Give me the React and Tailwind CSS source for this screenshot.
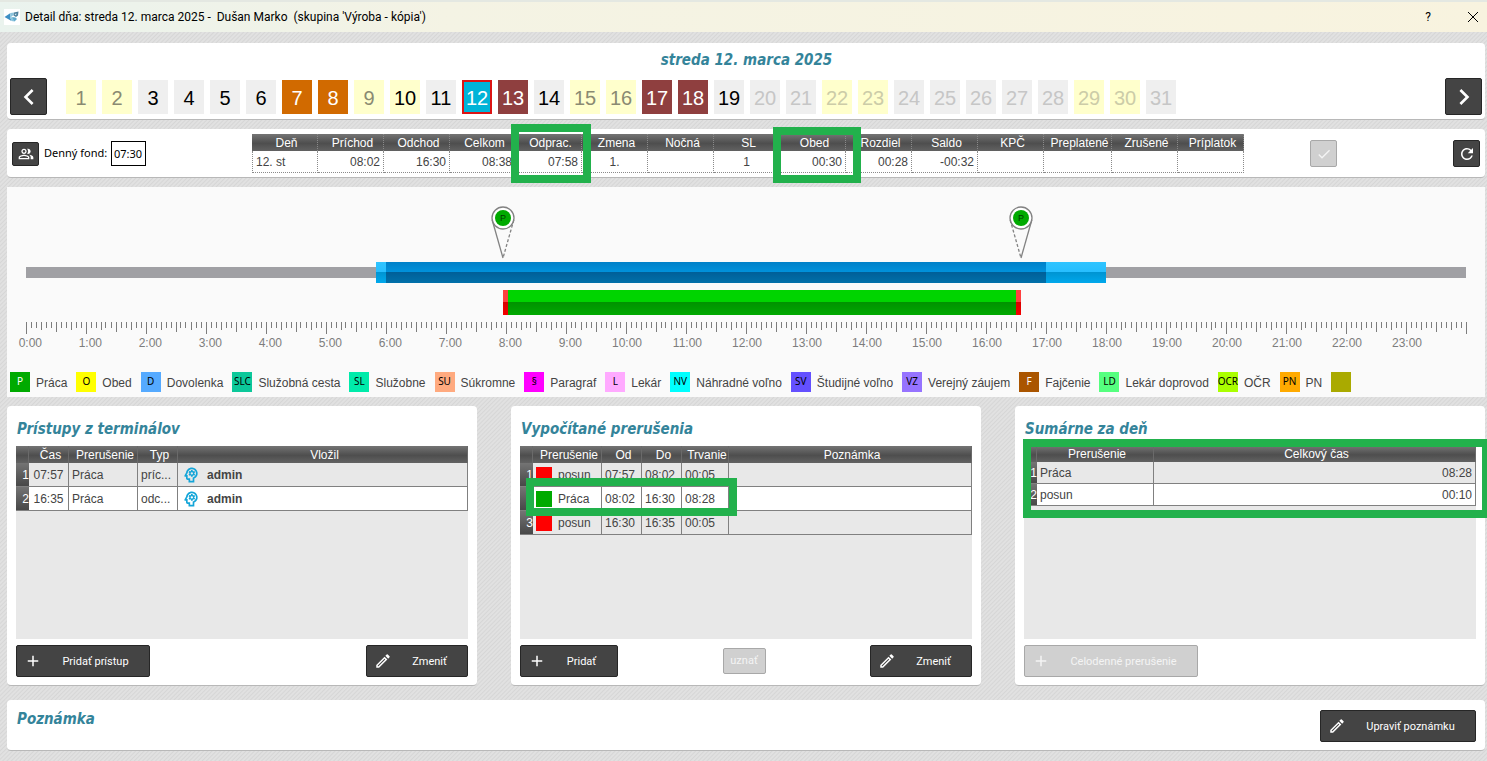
import clsx from "clsx";
import {
  MdAdd,
  MdCheck,
  MdChevronLeft,
  MdChevronRight,
  MdOutlineModeEdit,
  MdOutlinePeopleAlt,
  MdOutlinePsychology,
  MdRefresh,
} from "react-icons/md";

const headerRow =
  "bg-linear-to-b from-[#747474] via-[#4e4e4e] via-55% to-[#626262] text-white";

// weekend, work, error, vacation... one background and one text colour each
const dayStyles = {
  weekend: "bg-[#ffffcc] text-[#8a8a72]",
  weekendWork: "bg-[#ffffcc] text-black",
  weekendNext: "bg-[#ffffcc] text-[#cccca8]",
  work: "bg-[#efefef] text-black",
  next: "bg-[#efefef] text-[#c6c6c6]",
  orange: "bg-[#d16a00] text-white",
  red: "bg-[#8f3f3f] text-white",
  current: "border-2 border-[#dc1414] bg-[#00b4d8] text-white",
};

const dayKinds = {
  1: "weekend",
  2: "weekend",
  7: "orange",
  8: "orange",
  9: "weekend",
  10: "weekendWork",
  12: "current",
  13: "red",
  15: "weekend",
  16: "weekend",
  17: "red",
  18: "red",
  22: "weekendNext",
  23: "weekendNext",
  29: "weekendNext",
  30: "weekendNext",
};

const days = Array.from({ length: 31 }, (_, i) => i + 1).map((day) => ({
  day,
  kind: dayKinds[day] || (day > 19 ? "next" : "work"),
}));

const dayColumns = [
  { name: "Deň", value: "12. st", align: "text-left" },
  { name: "Príchod", value: "08:02" },
  { name: "Odchod", value: "16:30" },
  { name: "Celkom", value: "08:38" },
  { name: "Odprac.", value: "07:58" },
  { name: "Zmena", value: "1.", align: "text-center" },
  { name: "Nočná", value: "" },
  { name: "SL", value: "1", align: "text-center" },
  { name: "Obed", value: "00:30" },
  { name: "Rozdiel", value: "00:28" },
  { name: "Saldo", value: "-00:32" },
  { name: "KPČ", value: "" },
  { name: "Preplatené", value: "" },
  { name: "Zrušené", value: "" },
  { name: "Príplatok", value: "" },
];

const blueDark =
  "bg-[linear-gradient(#0080c8,#0092dc_48%,#005f98_48%,#0070aa)]";
const blueLight =
  "bg-[linear-gradient(#30c4ff,#26beff_48%,#0094d2_48%,#00a8ec)]";
const green = "bg-[linear-gradient(#00d400,#00d400_48%,#009200_48%,#00a800)]";
const red = "bg-[linear-gradient(#ff4040,#ff4040_48%,#d80000_48%,#f40000)]";

// times are minutes from midnight
const shiftBars = [
  { from: 350, to: 360, color: blueLight },
  { from: 360, to: 1020, color: blueDark },
  { from: 1020, to: 1080, color: blueLight },
];

const workBars = [
  { from: 477, to: 482, color: red },
  { from: 482, to: 990, color: green },
  { from: 990, to: 995, color: red },
];

const legend = [
  { code: "P", name: "Práca", color: "bg-[#00aa00] text-white" },
  { code: "O", name: "Obed", color: "bg-[#ffff00] text-black" },
  { code: "D", name: "Dovolenka", color: "bg-[#55aaff] text-black" },
  { code: "SLC", name: "Služobná cesta", color: "bg-[#0cc89a] text-black" },
  { code: "SL", name: "Služobne", color: "bg-[#00ebaa] text-black" },
  { code: "SU", name: "Súkromne", color: "bg-[#ffaa7f] text-black" },
  { code: "§", name: "Paragraf", color: "bg-[#ff00ff] text-black" },
  { code: "L", name: "Lekár", color: "bg-[#ffaaff] text-black" },
  { code: "NV", name: "Náhradné voľno", color: "bg-[#00ffff] text-black" },
  { code: "SV", name: "Študijné voľno", color: "bg-[#6450ff] text-black" },
  { code: "VZ", name: "Verejný záujem", color: "bg-[#9673ff] text-black" },
  { code: "F", name: "Fajčenie", color: "bg-[#aa5500] text-white" },
  { code: "LD", name: "Lekár doprovod", color: "bg-[#55ff7f] text-black" },
  { code: "OCR", name: "OČR", color: "bg-[#aaff00] text-black" },
  { code: "PN", name: "PN", color: "bg-[#ffaa00] text-black" },
  { code: "", name: "", color: "bg-[#aaaa00]" },
];

const accesses = [
  { time: "07:57", name: "Práca", type: "príc...", user: "admin" },
  { time: "16:35", name: "Práca", type: "odc...", user: "admin" },
];

const interruptions = [
  { name: "posun", color: "bg-[#ff0000]", from: "07:57", to: "08:02", total: "00:05" },
  { name: "Práca", color: "bg-[#00aa00]", from: "08:02", to: "16:30", total: "08:28" },
  { name: "posun", color: "bg-[#ff0000]", from: "16:30", to: "16:35", total: "00:05" },
];

const summary = [
  { name: "Práca", total: "08:28" },
  { name: "posun", total: "00:10" },
];

function App() {
  return (
    <div className="min-h-screen overflow-x-hidden bg-[repeating-linear-gradient(135deg,#d6d6d6_0px,#e1e1e1_1px,#e1e1e1_2px,#d6d6d6_3px)] font-['Liberation_Sans',sans-serif] text-xs text-[#444444]">
      <TitleBar />
      <main className="flex flex-col pt-[11px] pr-[2px] pb-2.5 pl-[7px]">
        <DayPicker />
        <DaySummary />
        <Timeline />
        <div className="mt-[9px] grid grid-cols-3 gap-[34px]">
          <Accesses />
          <Interruptions />
          <Totals />
        </div>
        <section className="mt-3.5 flex h-[51px] items-start justify-between rounded border-b border-[#b8b8b8] bg-white px-[9px] pt-2.5">
          <Title>Poznámka</Title>
          <ActionButton icon={MdOutlineModeEdit} width="w-[156px]">
            Upraviť poznámku
          </ActionButton>
        </section>
      </main>
    </div>
  );
}

const TitleBar = () => (
  <header className="flex h-8 items-center border-t-2 border-[#e4e8e2] bg-linear-to-r from-[#eaf3ee] via-[#f4f3e4] via-30% to-[#f8f3df] pl-1 font-[Roboto,sans-serif] text-xs text-black">
    <AppLogo />
    <h1 className="ml-[5px] whitespace-pre">
      {"Detail dňa: streda 12. marca 2025 -  Dušan Marko  (skupina 'Výroba - kópia')"}
    </h1>
    <button className="ml-auto w-[62px]" aria-label="Pomocník">
      ?
    </button>
    <button className="flex w-7 justify-center" aria-label="Zavrieť">
      <svg className="h-3 w-3" viewBox="0 0 12 12" stroke="black" fill="none">
        <path d="M1 1 L11 11 M11 1 L1 11" />
      </svg>
    </button>
  </header>
);

const AppLogo = () => (
  <svg className="h-4 w-4 bg-white" viewBox="0 0 16 16">
    <path d="M0.5 8 L6.5 4 L6 8 L7.5 12 Z" fill="#3d8fc4" />
    <path d="M6.5 4 L10 3.5 L9.5 6 L7 8 L10 9.5 L10.5 12.5 L7.5 12 L6 8 Z" fill="#8cc4dd" />
    <path d="M10 3.5 L14.5 2.5 L14 6.5 L12 8 L9.5 6.5 Z" fill="#4b7f9c" />
    <path d="M8 8 L11.5 8.5 L13 10 L10.5 12.5 Z" fill="#5fa9cc" />
    <path d="M10.5 5 L12.5 4.5 L12 6.5 Z" fill="#e4f2f8" />
  </svg>
);

const Title = ({ children }) => (
  <h2 className="pt-px pl-px font-['DejaVu_Sans_Condensed','DejaVu_Sans',sans-serif] text-[15px] leading-4 font-bold text-[#34849a] italic">
    {children}
  </h2>
);

const IconButton = ({ icon: Icon, label, size, iconSize, disabled }) => (
  <button
    aria-label={label}
    disabled={disabled}
    className={clsx(
      "flex shrink-0 items-center justify-center rounded-xs border",
      disabled
        ? "border-[#a8a8a8] bg-[#d0d0d0] text-[#f4f4f4]"
        : "border-[#262626] bg-[#444444] text-white",
      size
    )}
  >
    <Icon className={iconSize} />
  </button>
);

const ActionButton = ({ icon: Icon, width, disabled, children }) => (
  <button
    disabled={disabled}
    className={clsx(
      "flex h-8 items-center rounded-xs border pl-[7px] font-[Roboto,sans-serif] text-[11px]",
      disabled
        ? "border-[#a8a8a8] bg-[#d0d0d0] text-[#f4f4f4]"
        : "border-[#262626] bg-[#444444] text-white",
      width
    )}
  >
    <Icon className="h-[18px] w-[18px]" />
    <span className="flex-1 pt-0.5 text-center">{children}</span>
  </button>
);

// thick green frame drawn over the values that matter
const Highlight = ({ place }) => (
  <div className={clsx("pointer-events-none absolute border-8 border-[#22b14c]", place)}></div>
);

const DayPicker = () => (
  <section className="rounded border-b border-[#b8b8b8] bg-white pt-2 pr-[3px] pb-1 pl-[3px]">
    <div className="flex justify-center">
      <Title>streda 12. marca 2025</Title>
    </div>
    <div className="mt-2.5 flex items-center">
      <IconButton
        icon={MdChevronLeft}
        label="Predchádzajúci deň"
        size="h-[37px] w-[37px]"
        iconSize="h-8 w-8"
      />
      <div className="mr-auto ml-[19px] flex gap-1.5">
        {days.map(({ day, kind }) => (
          <button
            key={day}
            className={clsx(
              "flex h-[34px] w-[30px] items-center justify-center pt-0.5 text-xl",
              dayStyles[kind]
            )}
          >
            {day}
          </button>
        ))}
      </div>
      <IconButton
        icon={MdChevronRight}
        label="Nasledujúci deň"
        size="h-[37px] w-[37px]"
        iconSize="h-8 w-8"
      />
    </div>
  </section>
);

const DaySummary = () => (
  <section className="mt-[9px] flex h-[49px] items-center rounded border-b border-[#b8b8b8] bg-white px-[5px] pt-px">
    <IconButton
      icon={MdOutlinePeopleAlt}
      label="Skupina"
      size="h-6 w-[27px]"
      iconSize="h-4 w-4"
    />
    <label
      htmlFor="fond"
      className="ml-[5px] w-[67px] font-['Noto_Sans',sans-serif] text-[11px] whitespace-nowrap text-black"
    >
      Denný fond:
    </label>
    <input
      id="fond"
      defaultValue="07:30"
      className="h-[25px] w-[35px] border border-black bg-white px-0.5 font-['Noto_Sans',sans-serif] text-[11px] text-black"
    />
    <div className="relative ml-[106px] shrink-0">
      <table className="w-[992px] table-fixed border-separate border-spacing-0">
        <thead>
          <tr className={clsx("h-[17px]", headerRow)}>
            {dayColumns.map((column) => (
              <th
                key={column.name}
                className={clsx(
                  "border-r border-dotted border-[#8a8a8a] p-0 pl-1 leading-4 font-normal",
                  column.name === "Preplatené" ? "w-[68px]" : "w-[66px]"
                )}
              >
                {column.name}
              </th>
            ))}
          </tr>
        </thead>
        <tbody>
          <tr className="h-[22px]">
            {dayColumns.map((column) => (
              <td
                key={column.name}
                className={clsx(
                  "border-r border-b border-dotted border-[#8a8a8a] px-[3px] py-0 first:border-l",
                  column.align || "text-right"
                )}
              >
                {column.value}
              </td>
            ))}
          </tr>
        </tbody>
      </table>
      <Highlight place="-top-2.5 left-[259px] h-[59px] w-20" />
      <Highlight place="-top-[7px] left-[521px] h-14 w-[88px]" />
    </div>
    <div className="ml-[66px] flex flex-1 justify-between">
      <IconButton icon={MdCheck} label="Potvrdiť" size="h-[27px] w-[27px]" iconSize="h-4 w-4" disabled />
      <IconButton icon={MdRefresh} label="Obnoviť" size="h-[27px] w-[27px]" iconSize="h-[18px] w-[18px]" />
    </div>
  </section>
);

const percent = (minutes) => `${(minutes / 1440) * 100}%`;

const Timeline = () => (
  <section className="mt-[9px] bg-[#fafafa] pb-[5px]">
    <div className="mx-[19px]">
      <div className="relative h-[75px]">
        <Pin at={477} />
        <Pin at={995} flipped />
      </div>
      <Bars bars={shiftBars} height="h-[21px]">
        <div className="h-[11px] w-full bg-[#a0a0a4]"></div>
      </Bars>
      <div className="mt-[7px]">
        <Bars bars={workBars} height="h-[25px]" />
      </div>
      <Ruler />
    </div>
    <ul className="mt-5 flex gap-[9px] pl-[3px]">
      {legend.map((item) => (
        <li key={item.code} className="flex items-center gap-1.5 whitespace-nowrap">
          <span
            className={clsx(
              "flex h-5 w-5 items-center justify-center overflow-hidden font-['Noto_Sans',sans-serif] text-[10px]",
              item.color
            )}
          >
            {item.code}
          </span>
          <span className="pt-0.5">{item.name}</span>
        </li>
      ))}
    </ul>
  </section>
);

const Bars = ({ bars, height, children }) => (
  <div className={clsx("relative flex items-center", height)}>
    {children}
    {bars.map((bar) => (
      <div
        key={bar.from}
        className={clsx("absolute h-full", bar.color)}
        style={{ left: percent(bar.from), width: percent(bar.to - bar.from) }}
      ></div>
    ))}
  </div>
);

const Pin = ({ at, flipped }) => (
  <svg
    className="absolute bottom-[3px] -ml-3 h-[54px] w-6"
    viewBox="0 0 24 54"
    style={{ left: percent(at) }}
    fill="none"
    stroke="#828282"
    strokeWidth="1.3"
  >
    <circle cx="12" cy="13" r="11" fill="white" />
    <circle cx="12" cy="13" r="8" fill="#00aa00" stroke="none" />
    <path d="M1.2 15 L12 53" strokeDasharray={flipped ? "3 2" : "none"} />
    <path d="M22.8 15 L12 53" strokeDasharray={flipped ? "none" : "3 2"} />
    <text x="12" y="16" fontSize="9" textAnchor="middle" fill="#003c00" stroke="none">
      P
    </text>
  </svg>
);

const tickLength = (minutes) => {
  if (minutes % 60 === 0) return 12;
  if (minutes % 30 === 0) return 10;
  if (minutes % 15 === 0) return 8;
  return 6;
};

const Ruler = () => (
  <>
    <svg className="mt-[7px] h-3 w-full overflow-visible" stroke="#7d7d7d" shapeRendering="crispEdges">
      {Array.from({ length: 289 }, (_, i) => i * 5).map((minutes) => (
        <line
          key={minutes}
          x1={percent(minutes)}
          x2={percent(minutes)}
          y1="0"
          y2={tickLength(minutes)}
        />
      ))}
    </svg>
    <div className="grid grid-cols-24">
      {Array.from({ length: 24 }, (_, hour) => (
        <span key={hour} className="-ml-5 w-9 text-right leading-[18px] text-[#7d7d7d]">
          {hour}:00
        </span>
      ))}
    </div>
  </>
);

const Card = ({ title, buttons, children }) => (
  <section className="flex h-[280px] flex-col rounded border-b border-[#b8b8b8] bg-white px-[9px] pt-3.5 pb-2">
    <Title>{title}</Title>
    <div className="relative mt-[9px] flex-1 bg-[#e8e8e8]">{children}</div>
    <div className="mt-1.5 flex items-center justify-between">{buttons}</div>
  </section>
);

const Grid = ({ columns, headerHeight, children }) => (
  <table className="w-full table-fixed border-separate border-spacing-0">
    <thead>
      <tr className={clsx(headerHeight, headerRow)}>
        <th className="w-[13px] border-r border-[#6a6a6a] p-0"></th>
        {columns.map((column) => (
          <th
            key={column.name}
            className={clsx(
              "border-r border-[#6a6a6a] p-0 pl-1 leading-4 font-normal",
              column.width
            )}
          >
            {column.name}
          </th>
        ))}
      </tr>
    </thead>
    <tbody>{children}</tbody>
  </table>
);

const Row = ({ index, height, children }) => (
  <tr
    className={clsx(
      height,
      index % 2 ? "bg-white" : "bg-[#e8e8e8]",
      "*:border-b *:border-[#808080] *:not-first:border-r"
    )}
  >
    <th className="bg-linear-to-b from-[#747474] to-[#484848] p-0 text-right font-normal text-white">
      {index + 1}
    </th>
    {children}
  </tr>
);

const accessColumns = [
  { name: "Čas", width: "w-10" },
  { name: "Prerušenie", width: "w-[69px]" },
  { name: "Typ", width: "w-10" },
  { name: "Vložil" },
];

const Accesses = () => (
  <Card
    title="Prístupy z terminálov"
    buttons={
      <>
        <ActionButton icon={MdAdd} width="w-[134px]">
          Pridať prístup
        </ActionButton>
        <ActionButton icon={MdOutlineModeEdit} width="w-[102px]">
          Zmeniť
        </ActionButton>
      </>
    }
  >
    <Grid columns={accessColumns} headerHeight="h-[17px]">
      {accesses.map((access, index) => (
        <Row key={access.time} index={index} height="h-6">
          <td className="p-0 text-center">{access.time}</td>
          <td className="px-[3px] py-0">{access.name}</td>
          <td className="px-[3px] py-0">{access.type}</td>
          <td className="px-[3px] py-0 font-bold">
            <span className="flex items-center gap-1.5">
              <MdOutlinePsychology className="h-5 w-5 text-[#14a5d8]" />
              {access.user}
            </span>
          </td>
        </Row>
      ))}
    </Grid>
  </Card>
);

const interruptionColumns = [
  { name: "Prerušenie", width: "w-[69px]" },
  { name: "Od", width: "w-10" },
  { name: "Do", width: "w-10" },
  { name: "Trvanie", width: "w-[47px]" },
  { name: "Poznámka" },
];

const Interruptions = () => (
  <Card
    title="Vypočítané prerušenia"
    buttons={
      <>
        <ActionButton icon={MdAdd} width="w-[98px]">
          Pridať
        </ActionButton>
        <button
          disabled
          className="h-[26px] w-[43px] rounded-xs border border-[#a8a8a8] bg-[#d0d0d0] font-[Roboto,sans-serif] text-[11px] text-[#f4f4f4]"
        >
          uznať
        </button>
        <ActionButton icon={MdOutlineModeEdit} width="w-[102px]">
          Zmeniť
        </ActionButton>
      </>
    }
  >
    <Grid columns={interruptionColumns} headerHeight="h-[17px]">
      {interruptions.map((item, index) => (
        <Row key={item.from} index={index} height="h-6">
          <td className="px-[3px] py-0">
            <span className="flex items-center gap-1.5">
              <span className={clsx("h-4 w-4", item.color)}></span>
              {item.name}
            </span>
          </td>
          <td className="px-[3px] py-0">{item.from}</td>
          <td className="px-[3px] py-0">{item.to}</td>
          <td className="px-[3px] py-0">{item.total}</td>
          <td></td>
        </Row>
      ))}
    </Grid>
    <Highlight place="top-8 left-1.5 h-[38px] w-[211px]" />
  </Card>
);

const totalColumns = [
  { name: "Prerušenie", width: "w-[117px]" },
  { name: "Celkový čas" },
];

const Totals = () => (
  <Card
    title="Sumárne za deň"
    buttons={
      <ActionButton icon={MdAdd} width="w-[174px]" disabled>
        Celodenné prerušenie
      </ActionButton>
    }
  >
    <Grid columns={totalColumns} headerHeight="h-4">
      {summary.map((item, index) => (
        <Row key={item.name} index={index} height="h-[22px]">
          <td className="px-[3px] py-0">{item.name}</td>
          <td className="px-[3px] py-0 text-right">{item.total}</td>
        </Row>
      ))}
    </Grid>
    <Highlight place="-top-[7px] -right-3.5 -left-px h-[79px]" />
  </Card>
);

export default App;
